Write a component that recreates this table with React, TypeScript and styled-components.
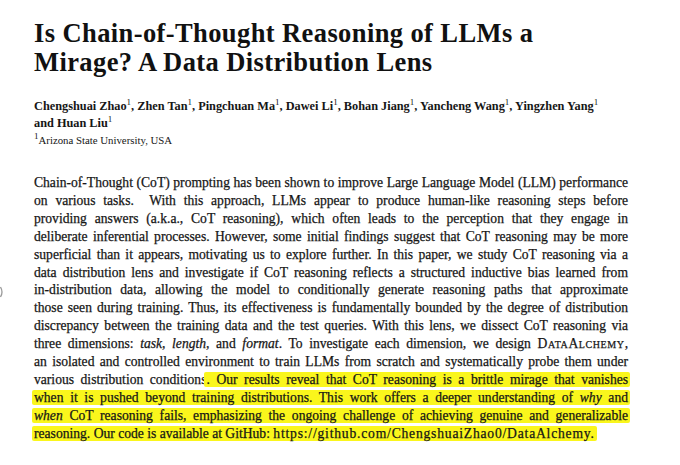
import React from 'react'
import styled, { createGlobalStyle } from 'styled-components'

const GlobalStyle = createGlobalStyle`
    html, body {
        margin: 0;
        padding: 0;
        background: #ffffff;
    }
    body {
        font-family: "Liberation Serif", "Times New Roman", serif;
        color: #161616;
    }
`

const Page = styled.div`
    position: relative;
    width: 680px;
    height: 465px;
    overflow: hidden;
    box-sizing: border-box;
    padding: 19px 52px 0 34px;
`

const Title = styled.h1`
    margin: 0;
    font-size: 26.5px;
    line-height: 29px;
    font-weight: 700;
    letter-spacing: 0.4px;
    color: #111111;
`

const Authors = styled.div`
    margin-top: 21px;
    font-size: 12.3px;
    line-height: 17px;
    font-weight: 700;
    color: #161616;
`

const Sup = styled.sup`
    font-size: 9px;
    font-weight: 400;
    vertical-align: 5px;
    line-height: 0;
`

const Affiliation = styled.div`
    margin-top: 1px;
    font-size: 10.8px;
    line-height: 14px;
`

const Abstract = styled.div`
    margin-top: 27px;
    font-size: 13.6px;
    line-height: 17.9px;
    -webkit-text-stroke: 0.25px #161616;
`

const Line = styled.div<{ $last?: boolean }>`
    white-space: nowrap;
    text-align: justify;
    text-align-last: ${(p) => (p.$last ? 'left' : 'justify')};
`

const Mark = styled.span`
    background: #faf61c;
    padding: 0 2px;
    margin: 0 -2px;
    border-radius: 2px;
`

const Url = styled.span`
    letter-spacing: 0.8px;
`

const SmallCaps = styled.span`
    font-variant: small-caps;
    letter-spacing: 0.6px;
`

const EdgeMark = styled.svg`
    position: absolute;
    left: 0;
    top: 286px;
`

const App = () => {
    return (
        <Page>
            <GlobalStyle />
            <Title>
                Is Chain-of-Thought Reasoning of LLMs a
                <br />
                Mirage? A Data Distribution Lens
            </Title>
            <Authors>
                Chengshuai Zhao<Sup>1</Sup>, Zhen Tan<Sup>1</Sup>, Pingchuan Ma<Sup>1</Sup>, Dawei Li<Sup>1</Sup>, Bohan Jiang
                <Sup>1</Sup>, Yancheng Wang<Sup>1</Sup>, Yingzhen Yang<Sup>1</Sup>
                <br />
                and Huan Liu<Sup>1</Sup>
            </Authors>
            <Affiliation>
                <Sup>1</Sup>Arizona State University, USA
            </Affiliation>
            <Abstract>
                <Line>Chain-of-Thought (CoT) prompting has been shown to improve Large Language Model (LLM) performance</Line>
                <Line>on various tasks.&nbsp; With this approach, LLMs appear to produce human-like reasoning steps before</Line>
                <Line>providing answers (a.k.a., CoT reasoning), which often leads to the perception that they engage in</Line>
                <Line>deliberate inferential processes. However, some initial findings suggest that CoT reasoning may be more</Line>
                <Line>superficial than it appears, motivating us to explore further. In this paper, we study CoT reasoning via a</Line>
                <Line>data distribution lens and investigate if CoT reasoning reflects a structured inductive bias learned from</Line>
                <Line>in-distribution data, allowing the model to conditionally generate reasoning paths that approximate</Line>
                <Line>those seen during training. Thus, its effectiveness is fundamentally bounded by the degree of distribution</Line>
                <Line>discrepancy between the training data and the test queries. With this lens, we dissect CoT reasoning via</Line>
                <Line>
                    three dimensions: <i>task</i>, <i>length</i>, and <i>format</i>. To investigate each dimension, we design{' '}
                    <SmallCaps>DataAlchemy</SmallCaps>,
                </Line>
                <Line>an isolated and controlled environment to train LLMs from scratch and systematically probe them under</Line>
                <Line>
                    various distribution conditions<Mark>. Our results reveal that CoT reasoning is a brittle mirage that vanishes</Mark>
                </Line>
                <Line>
                    <Mark>
                        when it is pushed beyond training distributions. This work offers a deeper understanding of <i>why</i> and
                    </Mark>
                </Line>
                <Line>
                    <Mark>
                        <i>when</i> CoT reasoning fails, emphasizing the ongoing challenge of achieving genuine and generalizable
                    </Mark>
                </Line>
                <Line $last>
                    <Mark>
                        reasoning. Our code is available at GitHub: <Url>https://github.com/ChengshuaiZhao0/DataAlchemy.</Url>
                    </Mark>
                </Line>
            </Abstract>
            <EdgeMark width="5" height="12" viewBox="0 0 5 12">
                <path d="M0.5 1 Q3.5 6 0.5 11" fill="none" stroke="#9a9a9a" strokeWidth="1.3" />
            </EdgeMark>
        </Page>
    )
}

export default App
